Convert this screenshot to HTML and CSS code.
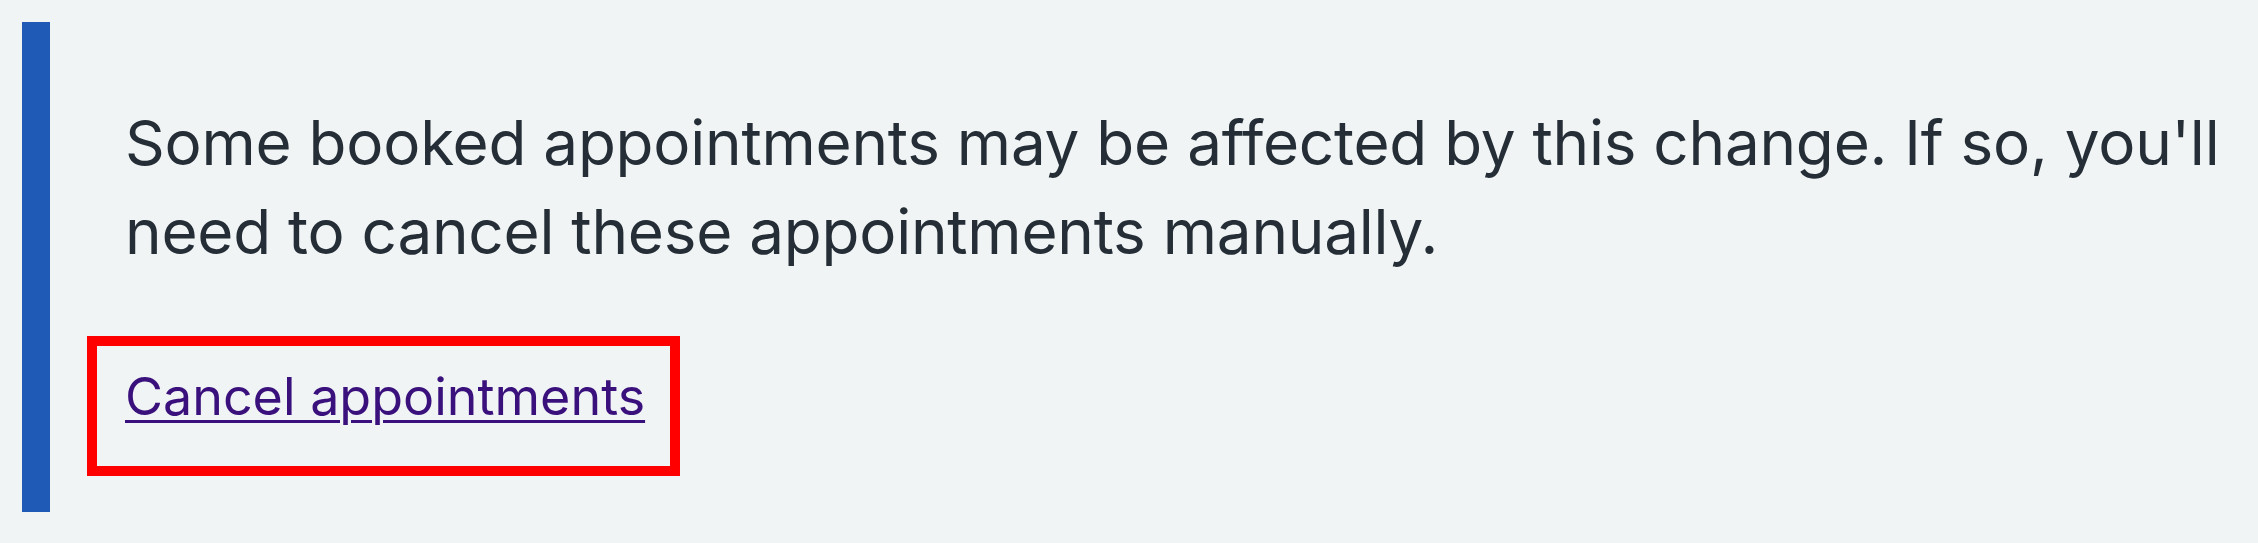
FILE: index.html
```html
<!DOCTYPE html>
<html lang="en">
<head>
<meta charset="utf-8">
<title>Inset text</title>
<link rel="stylesheet" href="styles.css">
</head>
<body>
<div class="page">
  <div class="inset">
    <p class="inset__text">Some booked appointments may be affected by this change. If so, you'll need to cancel these appointments manually.</p>
    <div class="highlight">
      <a class="inset__link" href="#">Cancel appointments</a>
    </div>
  </div>
</div>
</body>
</html>
```
FILE: styles.css
```css
html, body {
  margin: 0;
  padding: 0;
  background: #f0f4f5;
}

.page {
  padding: 22px 0 0 22px;
  font-family: Inter, "Noto Sans", sans-serif;
}

.inset {
  border-left: 28px solid #1e5ab6;
  padding: 76px 0 36px 37px;
}

.inset__text {
  margin: 0 0 60px 38px;
  font-size: 62px;
  letter-spacing: -0.25px;
  line-height: 89px;
  color: #252e36;
}

.highlight {
  display: inline-block;
  border: 10px solid #ff0000;
  padding: 20px 25px 38px 28px;
}

.inset__link {
  display: block;
  font-size: 52px;
  line-height: 1.2;
  color: #3a107c;
  text-decoration: underline;
  text-decoration-thickness: 3px;
  text-underline-offset: 5px;
}
```
